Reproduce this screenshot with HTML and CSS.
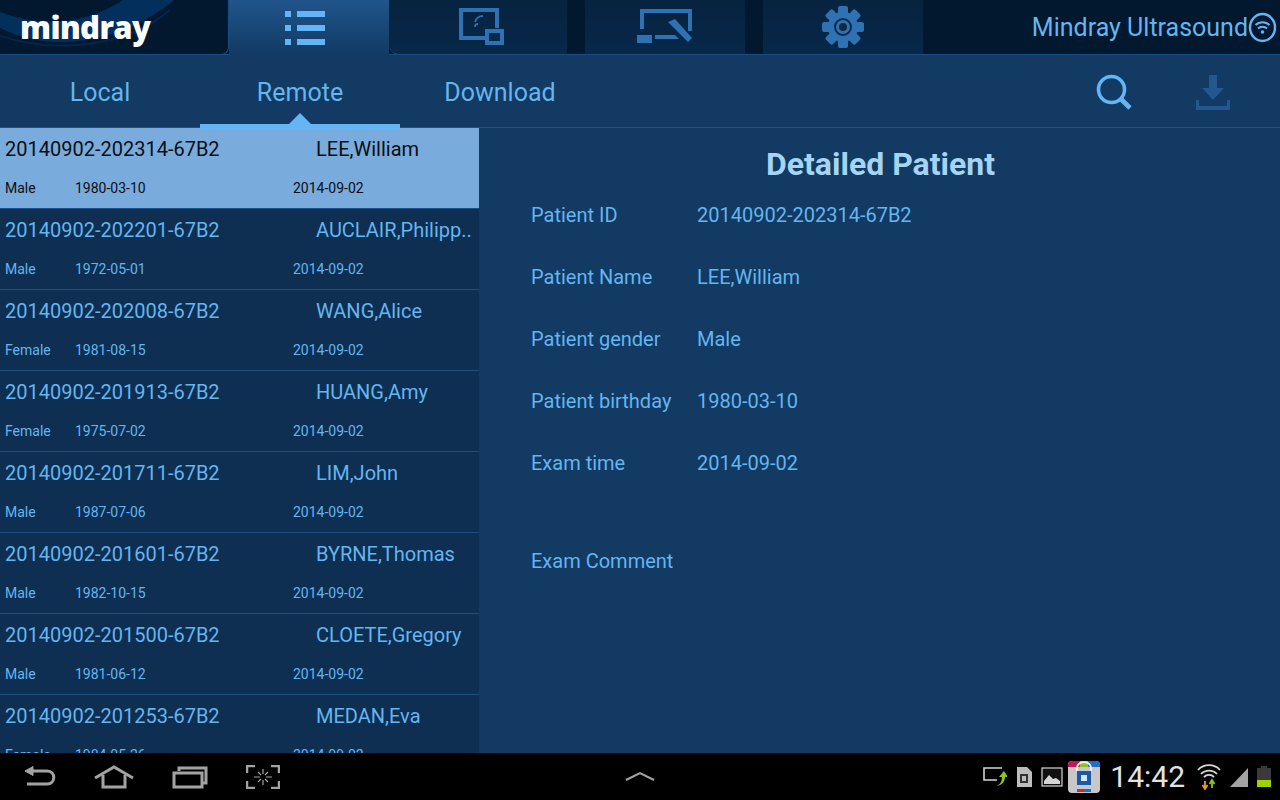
FILE: index.html
```html
<!DOCTYPE html>
<html lang="en">
<head>
  <meta charset="UTF-8" />
  <title>Mindray Ultrasound</title>
  <link rel="stylesheet" href="styles.css">
</head>
<body>
  <header class="topbar">
    <div class="logo-tab">
      <svg class="logo-arcs" width="229" height="54" viewBox="0 0 229 54">
        <path d="M-10 22 C50 60 130 40 180 -5 L130 -5 C90 25 40 30 -10 8 Z" fill="#032f5c"/>
        <path d="M-10 32 C50 56 125 48 170 10" fill="none" stroke="#03264c" stroke-width="2"/>
      </svg>
      <span class="logo-text">mindray</span>
    </div>
    <div class="tab tab-active">
      <svg width="50" height="36" viewBox="0 0 50 36" fill="#64b5f5">
        <rect x="1" y="1" width="6" height="6"/><rect x="13" y="1" width="28" height="6"/>
        <rect x="1" y="15" width="6" height="6"/><rect x="13" y="15" width="28" height="6"/>
        <rect x="1" y="29" width="6" height="6"/><rect x="13" y="29" width="28" height="6"/>
      </svg>
    </div>
    <div class="tab tab-first">
      <svg width="56" height="40" viewBox="0 0 56 40" fill="none" stroke="#2f72b4">
        <path d="M27 31H3V3H39V21" stroke-width="4"/>
        <rect x="29" y="24" width="15" height="12" stroke-width="4" fill="#0a2a4a"/>
        <path d="M17 20a3 3 0 0 1 3 -3M17 15a8 8 0 0 1 8 -6" stroke-width="1.8"/>
      </svg>
    </div>
    <div class="tab">
      <svg width="56" height="36" viewBox="0 0 56 36" fill="#2f72b4">
        <path d="M3 0H55V22H51V4H7V20H3Z"/>
        <rect x="0" y="26" width="15" height="8"/>
        <path d="M18 26H38L42 30H18Z"/>
        <path d="M31 13L38 10L55 29L51 33Z"/>
      </svg>
    </div>
    <div class="tab tab-last">
      <svg width="44" height="44" viewBox="0 0 44 44">
        <g fill="#2f72b4">
          <circle cx="22" cy="22" r="15"/>
          <rect x="17" y="1" width="10" height="42" rx="2"/>
          <rect x="17" y="1" width="10" height="42" rx="2" transform="rotate(45 22 22)"/>
          <rect x="17" y="1" width="10" height="42" rx="2" transform="rotate(90 22 22)"/>
          <rect x="17" y="1" width="10" height="42" rx="2" transform="rotate(135 22 22)"/>
        </g>
        <circle cx="22" cy="22" r="9" fill="#0a2a4a"/>
        <circle cx="22" cy="22" r="5.5" fill="none" stroke="#2f72b4" stroke-width="3"/>
      </svg>
    </div>
    <div class="device">
      <span>Mindray Ultrasound</span>
      <svg width="29" height="31" viewBox="0 0 29 31" fill="none" stroke="#64b5f5">
        <ellipse cx="14.5" cy="15.5" rx="12.5" ry="13.5" stroke-width="2.4"/>
        <path d="M7.5 13a10 10 0 0 1 14 0M10 16.5a6.5 6.5 0 0 1 9 0" stroke-width="2"/>
        <circle cx="14.5" cy="20" r="1.8" fill="#64b5f5" stroke="none"/>
      </svg>
    </div>
  </header>

  <nav class="subnav">
    <a class="subtab">Local</a>
    <a class="subtab subtab-active">Remote</a>
    <a class="subtab">Download</a>
    <div class="actions">
      <svg width="38" height="36" viewBox="0 0 38 36" fill="none" stroke="#64b5f5">
        <circle cx="15.5" cy="15.5" r="13" stroke-width="3.6"/>
        <path d="M25 25L34 34" stroke-width="4.6"/>
      </svg>
      <svg width="36" height="36" viewBox="0 0 36 36" fill="#23578f">
        <path d="M14 1H22V14H29L18 26L7 14H14Z"/>
        <path d="M1 26H4V32H32V26H35V36H1Z"/>
      </svg>
    </div>
  </nav>

  <main class="content">
    <section class="list">
      <div class="row row-selected">
        <span class="pid">20140902-202314-67B2</span><span class="pname">LEE,William</span>
        <small>Male</small><small>1980-03-10</small><small class="exam">2014-09-02</small>
      </div>
      <div class="row">
        <span class="pid">20140902-202201-67B2</span><span class="pname">AUCLAIR,Philipp..</span>
        <small>Male</small><small>1972-05-01</small><small class="exam">2014-09-02</small>
      </div>
      <div class="row">
        <span class="pid">20140902-202008-67B2</span><span class="pname">WANG,Alice</span>
        <small>Female</small><small>1981-08-15</small><small class="exam">2014-09-02</small>
      </div>
      <div class="row">
        <span class="pid">20140902-201913-67B2</span><span class="pname">HUANG,Amy</span>
        <small>Female</small><small>1975-07-02</small><small class="exam">2014-09-02</small>
      </div>
      <div class="row">
        <span class="pid">20140902-201711-67B2</span><span class="pname">LIM,John</span>
        <small>Male</small><small>1987-07-06</small><small class="exam">2014-09-02</small>
      </div>
      <div class="row">
        <span class="pid">20140902-201601-67B2</span><span class="pname">BYRNE,Thomas</span>
        <small>Male</small><small>1982-10-15</small><small class="exam">2014-09-02</small>
      </div>
      <div class="row">
        <span class="pid">20140902-201500-67B2</span><span class="pname">CLOETE,Gregory</span>
        <small>Male</small><small>1981-06-12</small><small class="exam">2014-09-02</small>
      </div>
      <div class="row">
        <span class="pid">20140902-201253-67B2</span><span class="pname">MEDAN,Eva</span>
        <small>Female</small><small>1984-05-26</small><small class="exam">2014-09-02</small>
      </div>
    </section>
    <section class="detail">
      <h1>Detailed Patient</h1>
      <dl class="fields">
        <dt>Patient ID</dt><dd>20140902-202314-67B2</dd>
        <dt>Patient Name</dt><dd>LEE,William</dd>
        <dt>Patient gender</dt><dd>Male</dd>
        <dt>Patient birthday</dt><dd>1980-03-10</dd>
        <dt>Exam time</dt><dd>2014-09-02</dd>
        <dt class="comment">Exam Comment</dt><dd class="comment"></dd>
      </dl>
    </section>
  </main>

  <footer class="sysbar">
    <div class="sys-left">
      <svg width="34" height="24" viewBox="0 0 34 24" fill="none" stroke="#a3a3a3" stroke-width="3">
        <path d="M3 6L11 1.5V10.5Z" fill="#a3a3a3" stroke-width="1"/>
        <path d="M10 6H25C34 6 34 19 25 19H5"/>
      </svg>
      <svg width="40" height="24" viewBox="0 0 40 24" fill="none" stroke="#a3a3a3" stroke-width="3">
        <path d="M1 13L20 2L39 13"/>
        <path d="M9 10V22H31V10"/>
      </svg>
      <svg width="36" height="24" viewBox="0 0 36 24" fill="none" stroke="#a3a3a3" stroke-width="3">
        <path d="M7 6V3H34V18H30"/>
        <rect x="2" y="8" width="28" height="14"/>
      </svg>
      <svg width="34" height="24" viewBox="0 0 34 24" fill="none" stroke="#a3a3a3" stroke-width="2">
        <path d="M9 1H1V8M25 1H33V8M9 23H1V16M25 23H33V16" stroke-width="2.5"/>
        <path d="M17 4V9M17 15V20M8 12H14M20 12H26M12 7L15 10M22 7L19 10M12 17L15 14M22 17L19 14" stroke-width="1.2"/>
      </svg>
    </div>
    <svg class="sys-up" width="30" height="12" viewBox="0 0 30 12" fill="none" stroke="#a3a3a3" stroke-width="2">
      <path d="M1 10L15 3L29 10"/>
    </svg>
    <div class="sys-right">
      <svg width="24" height="20" viewBox="0 0 24 20" fill="none" stroke="#d5d5d5" stroke-width="1.6">
        <path d="M19 1H1V13H14"/>
        <path d="M13 19C18 18 19 13 19 10H16L21 4L25 10H22C22 15 18 19 13 19Z" fill="#8fc31f" stroke="none"/>
      </svg>
      <svg class="sys-sd" width="16" height="20" viewBox="0 0 16 20" fill="#bdbdbd">
        <path d="M1 0H11L16 5V20H1Z"/>
        <rect x="4" y="7" width="8" height="9" fill="#333"/>
        <rect x="6" y="9" width="4" height="5" fill="#bdbdbd"/>
      </svg>
      <svg class="sys-pic" width="22" height="20" viewBox="0 0 22 20">
        <rect x="1" y="1" width="20" height="18" fill="#111" stroke="#d5d5d5" stroke-width="1.2"/>
        <path d="M3 17V14L8 8L12 12L15 11L19 14V17Z" fill="#d5d5d5"/>
      </svg>
      <svg class="sys-app" width="32" height="32" viewBox="0 0 32 32">
        <rect width="32" height="32" rx="4" fill="#c8c8c8"/>
        <path d="M0 4a4 4 0 0 1 4 -4H12V6H0Z" fill="#c2185b"/>
        <rect x="12" width="8" height="6" fill="#8fc31f"/>
        <path d="M20 0H28a4 4 0 0 1 4 4V6H20Z" fill="#1e6fc9"/>
        <path d="M9 10V7a7 6 0 0 1 14 0V10" fill="none" stroke="#eee" stroke-width="2"/>
        <rect x="9" y="10" width="14" height="14" fill="#1a58a8"/>
        <rect x="13" y="14" width="6" height="6" fill="#d6e4f7"/>
        <rect x="9" y="28" width="7" height="3" fill="#d7262b"/>
        <rect x="16" y="28" width="7" height="3" fill="#1e6fc9"/>
      </svg>
      <span class="clock">14:42</span>
      <svg width="24" height="26" viewBox="0 0 24 26" fill="none" stroke="#d5d5d5" stroke-width="1.8">
        <path d="M1 6a15 15 0 0 1 22 0M4 10a11 11 0 0 1 16 0M7 13a7 7 0 0 1 10 0"/>
        <path d="M8 17V24M5.500 21L8 25L10.500 21" stroke="#f29b1d"/>
        <path d="M15 24V17M12.500 20L15 16L17.500 20" stroke="#8fc31f"/>
      </svg>
      <svg class="sys-signal" width="18" height="20" viewBox="0 0 18 20" fill="#a3a3a3">
        <path d="M0 20L18 1V20Z"/>
      </svg>
      <svg width="14" height="21" viewBox="0 0 14 21">
        <rect x="4" width="6" height="2" fill="#3a3a3a"/>
        <rect y="2" width="14" height="19" fill="#3a3a3a"/>
        <rect y="14" width="14" height="7" fill="#9bd200"/>
      </svg>
    </div>
  </footer>
</body>
</html>
```

FILE: styles.css
```css
* {
  box-sizing: border-box;
}
html, body {
  margin: 0;
  height: 100%;
}
body {
  width: 1280px;
  height: 800px;
  overflow: hidden;
  display: flex;
  flex-direction: column;
  background: #123a63;
  font-family: Roboto, "Liberation Sans", sans-serif;
  color: #64b5f0;
}
svg {
  display: block;
  flex: none;
}

/* top tabs */
.topbar {
  height: 55px;
  display: flex;
  background: #02182f;
  border-bottom: 1px solid #1a4d85;
}
.logo-tab {
  position: relative;
  width: 229px;
  margin-bottom: -1px;
  background: #02182f;
  border-right: 1px solid #1a4d85;
  border-bottom: 1px solid #1a4d85;
  border-bottom-right-radius: 8px;
  overflow: hidden;
  display: flex;
  align-items: center;
  padding-left: 20px;
}
.logo-arcs {
  position: absolute;
  left: 0;
  top: 0;
}
.logo-text {
  position: relative;
  font-family: "Open Sans", sans-serif;
  font-weight: 800;
  font-size: 31px;
  letter-spacing: -0.6px;
  color: #fff;
  line-height: 54px;
}
.tab {
  width: 160px;
  margin-right: 18px;
  display: flex;
  align-items: center;
  justify-content: center;
  background: linear-gradient(#06233f, #08284a);
  border-bottom: 1px solid #1a4d85;
  margin-bottom: -1px;
}
.tab-active {
  width: 160px;
  margin-right: 0;
  margin-bottom: -1px;
  background: linear-gradient(#20558c, #123a63);
  border-bottom: none;
}
.tab-first {
  width: 178px;
  padding-left: 16px;
  border-bottom-left-radius: 10px;
}
.tab-last {
  margin-right: 0;
}
.device {
  flex: 1;
  display: flex;
  align-items: center;
  justify-content: flex-end;
  padding-right: 3px;
  font-size: 25px;
}

/* second row */
.subnav {
  height: 73px;
  display: flex;
  border-bottom: 1px solid #1b4f86;
}
.subtab {
  position: relative;
  width: 200px;
  height: 73px;
  padding-top: 22px;
  text-align: center;
  font-size: 25px;
  line-height: 32px;
}
.subtab-active::after {
  content: "";
  position: absolute;
  left: 0;
  right: 0;
  bottom: -1px;
  height: 5px;
  background: #64b5f5;
}
.subtab-active::before {
  content: "";
  position: absolute;
  left: 89px;
  bottom: 4px;
  border-left: 11px solid transparent;
  border-right: 11px solid transparent;
  border-bottom: 11px solid #64b5f5;
}
.actions {
  margin-left: auto;
  display: flex;
  gap: 61px;
  padding: 19px 49px 0 0;
}

/* patient list */
.content {
  height: 625px;
  display: flex;
  overflow: hidden;
}
.list {
  width: 479px;
  height: 625px;
  overflow: hidden;
  flex: none;
  background: #0e2f52;
}
.row {
  height: 81px;
  padding: 8px 0 0 5px;
  display: grid;
  grid-template-columns: 70px 218px 23px 1fr;
  grid-template-rows: 26px 39px;
  align-items: center;
  border-bottom: 1px solid #1b4f86;
}
.row small {
  font-size: 14px;
  padding-top: 13px;
}
.pid {
  grid-column: 1 / 4;
  font-size: 20px;
}
.pname {
  font-size: 20px;
  white-space: nowrap;
}
.exam {
  grid-column: 3 / 5;
}
.row-selected {
  background: #79acdc;
  color: #0a0f14;
}

/* detail pane */
.detail {
  flex: 1;
  margin-left: 2px;
  padding-top: 15px;
}
.detail h1 {
  margin: 0;
  text-align: center;
  font-size: 32px;
  line-height: 42px;
  font-weight: 700;
  color: #a6d4f3;
}
.fields {
  margin: 15px 0 0 50px;
  display: grid;
  grid-template-columns: 166px 1fr;
  grid-auto-rows: 62px;
  font-size: 20px;
  line-height: 30px;
}
.fields dd {
  margin: 0;
}
.fields .comment {
  margin-top: 36px;
}

/* android system bar */
.sysbar {
  flex: 1;
  position: relative;
  display: flex;
  align-items: center;
  background: #000;
}
.sys-left {
  display: flex;
  align-items: center;
  gap: 38px;
  padding-left: 22px;
}
.sys-up {
  position: absolute;
  left: 625px;
  top: 17px;
}
.sys-right {
  margin-left: auto;
  display: flex;
  align-items: center;
  gap: 9px;
  padding-right: 9px;
}
.sys-app {
  margin-left: -4px;
}
.clock {
  font-size: 30px;
  color: #e2e2e2;
  margin: 0 3px 0 1px;
}
```
